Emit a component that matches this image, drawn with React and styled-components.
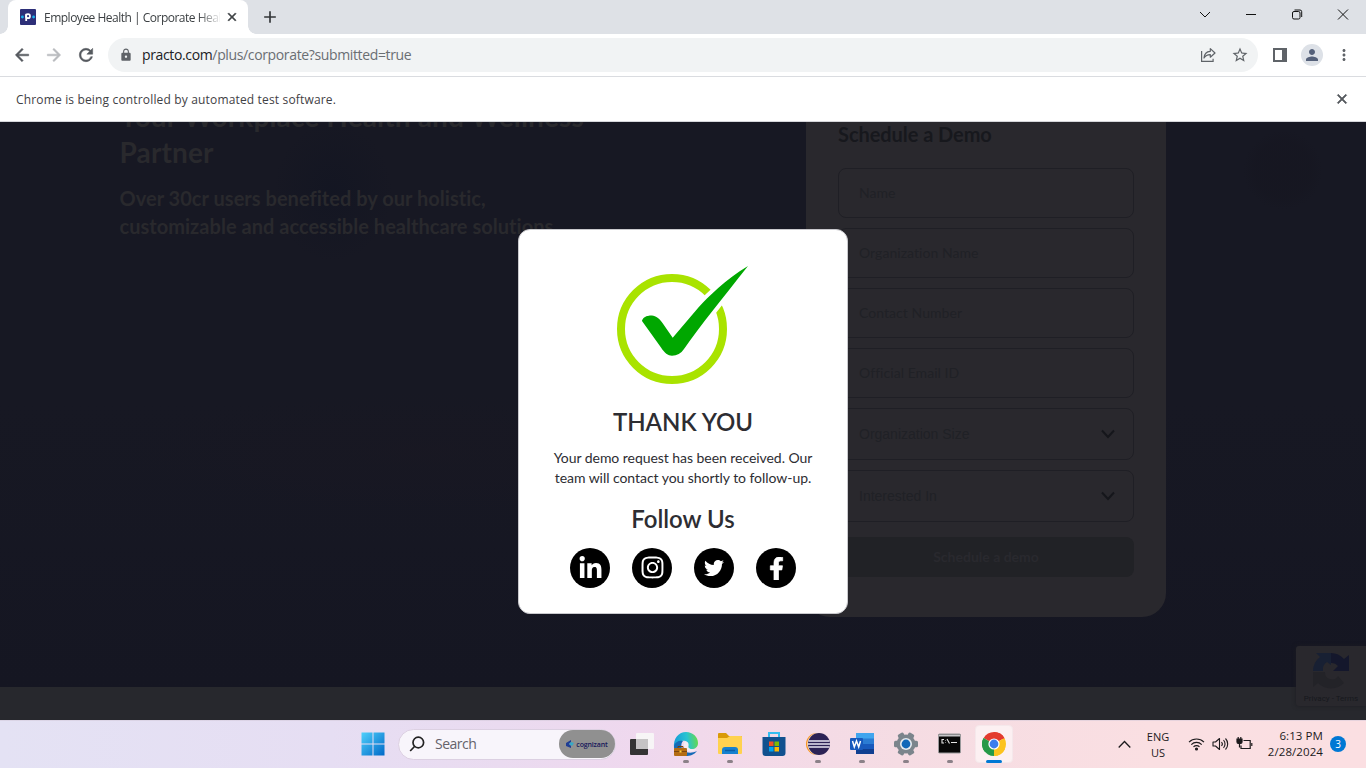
import React from "react";
import styled, { createGlobalStyle } from "styled-components";
import { FaLinkedinIn, FaInstagram, FaTwitter, FaFacebookF } from "react-icons/fa";
import { MdArrowBack, MdArrowForward, MdRefresh, MdLock, MdStarBorder, MdClose, MdAdd, MdPerson, MdMoreVert } from "react-icons/md";

const GlobalStyle = createGlobalStyle`
  * { box-sizing: border-box; }
  body { margin: 0; overflow: hidden; background: #171823; }
  h1, h2, p { margin: 0; }
  svg { display: block; flex: none; }
  path[fill="none"][d^="M0 0h24"] { stroke: none; }
`;

const uiFont = `"Open Sans", "Noto Sans", sans-serif`;

const Screen = styled.div`
  width: 1366px;
  height: 768px;
  display: flex;
  flex-direction: column;
  overflow: hidden;
  font-family: ${uiFont};
`;

/* ---------- browser frame ---------- */
const TabStrip = styled.header`
  height: 34px;
  flex: none;
  background: #dee1e6;
  display: flex;
  align-items: stretch;
  padding-left: 8px;
`;
const Tab = styled.div`
  width: 240px;
  background: #fff;
  border-radius: 8px 8px 0 0;
  display: flex;
  align-items: center;
  padding: 0 8px 0 12px;
  position: relative;
  &::before, &::after {
    content: "";
    position: absolute;
    bottom: 0;
    width: 8px;
    height: 8px;
  }
  &::before { left: -8px; background: radial-gradient(circle at 0 0, transparent 7.5px, #fff 8px); }
  &::after { right: -8px; background: radial-gradient(circle at 100% 0, transparent 7.5px, #fff 8px); }
`;
const TabTitle = styled.span`
  width: 176px;
  margin: 0 5px 0 8px;
  overflow: hidden;
  white-space: nowrap;
  font-size: 12px;
  letter-spacing: -0.5px;
  color: #3c4043;
  mask-image: linear-gradient(90deg, #000 154px, transparent 178px);
`;
const NewTab = styled.div`
  padding: 7px 0 0 12px;
  color: #333639;
`;
const WindowControls = styled.div`
  margin-left: auto;
  display: flex;
  height: 29px;
  align-items: center;
`;
const WindowButton = styled.div`
  width: 46px;
  display: flex;
  justify-content: center;
`;
const Toolbar = styled.div`
  height: 43px;
  flex: none;
  background: #fff;
  border-bottom: 1px solid #dadce0;
  display: flex;
  align-items: center;
  padding: 0 12px;
  color: #5f6368;
`;
const NavButton = styled.div`
  width: 32px;
  color: ${(p) => (p.$disabled ? "#b9bbbe" : "#55595e")};
  svg { stroke-width: 0.6px; }
`;
const Omnibox = styled.div`
  width: 1150px;
  height: 34px;
  border-radius: 17px;
  background: #f1f3f4;
  display: flex;
  align-items: center;
  padding: 0 9px 0 11px;
`;
const Url = styled.span`
  flex: 1;
  margin: -1px 0 0 9px;
  font-size: 14px;
  letter-spacing: -0.36px;
  color: #6a6e73;
  b { font-weight: 400; color: #202124; }
`;
const OmniActions = styled.div`
  display: flex;
  gap: 14px;
  align-items: center;
`;
const ToolbarActions = styled.div`
  display: flex;
  align-items: center;
  margin-left: 15px;
`;
const Avatar = styled.div`
  width: 22px;
  height: 22px;
  margin: 0 12px 0 14px;
  border-radius: 50%;
  background: #dde1e7;
  color: #55617a;
  display: flex;
  align-items: center;
  justify-content: center;
`;
const InfoBar = styled.div`
  height: 45px;
  flex: none;
  background: #fff;
  border-bottom: 1px solid #d5d6da;
  display: flex;
  align-items: center;
  justify-content: space-between;
  padding: 0 16px;
  font-size: 12px;
  color: #3f4145;
  letter-spacing: 0.16px;
`;

/* ---------- web page under the dialog ---------- */
const Page = styled.main`
  height: 598px;
  flex: none;
  position: relative;
  overflow: hidden;
  font-family: Lato, sans-serif;
  background: #27282d;
`;
const Hero = styled.section`
  height: 565px;
  display: flex;
  align-items: flex-start;
  justify-content: space-between;
  padding: 0 200px 0 119.5px;
  background:
    radial-gradient(circle at 1283px 48px, rgba(21, 21, 31, 0.5), rgba(21, 21, 31, 0.4) 28px, transparent 40px),
    radial-gradient(ellipse 60px 70px at 333px 70px, rgba(18, 21, 34, 0.7), transparent),
    radial-gradient(ellipse 300px 60px at 420px 330px, rgba(25, 24, 34, 0.7), transparent),
    linear-gradient(180deg, #171823 0%, #171823 50%, #151622 100%);
`;
const Copy = styled.div`
  color: #29292d;
`;
const Headline = styled.h1`
  margin-top: -24px;
  font-size: 28px;
  line-height: 36px;
  font-weight: 700;
  letter-spacing: 0.15px;
`;
const Lead = styled.p`
  margin-top: 14px;
  font-size: 20px;
  line-height: 28px;
  font-weight: 700;
  letter-spacing: 0.03px;
`;
const FormCard = styled.div`
  width: 360px;
  height: 495px;
  padding: 0 32px;
  border-radius: 0 0 24px 24px;
  background: #29282d;
`;
const FormTitle = styled.h2`
  margin: -1px 0 21px;
  font-size: 20px;
  line-height: 26px;
  font-weight: 700;
  letter-spacing: -0.06px;
  color: #17181d;
`;
const Field = styled.div`
  height: ${(p) => (p.$select ? 52 : 50)}px;
  margin-bottom: 10px;
  padding: 0 17px ${(p) => (p.$select ? 0 : 2)}px 20px;
  border: 1px solid #1f1f25;
  border-radius: 8px;
  display: flex;
  align-items: center;
  justify-content: space-between;
  font-family: ${(p) => (p.$select ? `"Liberation Sans", Arial, sans-serif` : "Lato, sans-serif")};
  font-size: 14px;
  letter-spacing: ${(p) => (p.$select ? 0 : 0.05)}px;
  color: #202126;
`;
const Submit = styled.div`
  height: 40px;
  margin-top: 15px;
  padding-bottom: 2px;
  border-radius: 8px;
  background: #212226;
  color: #29292e;
  font-size: 14px;
  font-weight: 700;
  display: flex;
  align-items: center;
  justify-content: center;
`;
const Captcha = styled.aside`
  position: absolute;
  right: 0;
  top: 524px;
  width: 70px;
  height: 60px;
  border-radius: 3px 0 0 3px;
  background: #29282d;
  box-shadow: 0 0 4px #1c1c22;
  display: flex;
  flex-direction: column;
  align-items: center;
  padding-top: 6px;
  font: 8px Roboto, sans-serif;
  color: #17181d;
  svg { margin-bottom: 4px; }
`;

/* ---------- dialog ---------- */
const Overlay = styled.div`
  position: absolute;
  inset: 0;
  display: flex;
  justify-content: center;
  align-items: flex-start;
  padding-top: 107px;
`;
const Dialog = styled.div`
  width: 330px;
  height: 385px;
  border-radius: 12px;
  border: 1px solid #c9c9cd;
  background: #fff;
  color: #2d2d32;
  text-align: center;
  display: flex;
  flex-direction: column;
  align-items: center;
  padding-top: 35px;
`;
const DialogTitle = styled.h2`
  margin-top: ${(p) => p.$gap}px;
  font-size: 24px;
  line-height: 30px;
  font-weight: 600;
`;
const DialogText = styled.p`
  width: 270px;
  margin-top: 11px;
  font-size: 14px;
  line-height: 20px;
  letter-spacing: -0.05px;
`;
const Socials = styled.div`
  display: flex;
  gap: 22px;
  margin-top: 13.5px;
`;
const Social = styled.div`
  width: 40px;
  height: 40px;
  padding-top: ${(p) => p.$drop || 0}px;
  border-radius: 50%;
  background: #000;
  color: #fff;
  display: flex;
  align-items: center;
  justify-content: center;
`;

/* ---------- taskbar ---------- */
const Taskbar = styled.footer`
  height: 48px;
  flex: none;
  display: flex;
  align-items: center;
  padding-left: 361px;
  background: linear-gradient(90deg, #e4e2f4 0, #e6def3 330px, #eadbf0 500px, #efd8ee 640px, #f3dae8 760px, #f5dce3 900px, #fadfe2 1150px, #fbdfe2 100%);
  box-shadow: inset 0 1px rgba(210, 200, 215, 0.5);
`;
const SearchBox = styled.div`
  width: 218px;
  height: 31px;
  margin: 0 4px 0 13px;
  border-radius: 16px;
  background: #f8f5fb;
  border: 1px solid #dcd0e2;
  display: flex;
  align-items: center;
  padding-left: 10px;
  font-size: 14px;
  letter-spacing: -0.5px;
  color: #65626a;
  span { margin: -1px 0 0 10px; flex: 1; }
`;
const SearchBadge = styled.div`
  width: 56px;
  height: 28px;
  border-radius: 14px;
  background: #909090;
  display: flex;
  align-items: center;
  justify-content: center;
  gap: 2px;
  font-size: 7px;
  font-weight: 600;
  letter-spacing: -0.15px;
  color: #17175a;
`;
const AppSlot = styled.div`
  width: 44px;
  height: 48px;
  display: flex;
  align-items: center;
  justify-content: center;
  position: relative;
  &::after {
    content: "";
    position: absolute;
    bottom: 5px;
    width: ${(p) => (p.$active ? 16 : p.$running ? 6 : 0)}px;
    height: 3px;
    border-radius: 2px;
    background: ${(p) => (p.$active ? "#0078d4" : "#8b8188")};
  }
`;
const ActiveTile = styled.div`
  width: 38px;
  height: 38px;
  border-radius: 4px;
  background: #fcf0f2;
  border: 1px solid #f5e8eb;
  display: flex;
  align-items: center;
  justify-content: center;
`;
const Tray = styled.div`
  margin-left: auto;
  display: flex;
  align-items: center;
  padding-right: 20px;
  font-size: 11px;
  line-height: 16px;
  color: #1c1a1c;
`;
const Language = styled.div`
  width: 30px;
  margin: 1px 15px 0 12px;
  text-align: center;
`;
const TrayIcons = styled.div`
  display: flex;
  gap: 7px;
`;
const Clock = styled.div`
  width: 64px;
  margin: -1px 7px 0 6px;
  text-align: right;
  white-space: nowrap;
  font-size: 11.5px;
  letter-spacing: 0.08px;
`;
const Count = styled.div`
  width: 16px;
  height: 16px;
  border-radius: 50%;
  background: #0078d4;
  color: #fff;
  text-align: center;
  font-size: 10px;
`;

const PractoIcon = () => (
  <svg width="16" height="16" viewBox="0 0 16 16">
    <rect width="16" height="16" rx="1" fill="#2d2f78" />
    <circle cx="2.4" cy="8" r="1.4" fill="#19b4ef" />
    <circle cx="13.6" cy="8" r="1.4" fill="#19b4ef" />
    <path d="M6.2 4.8V12" stroke="#fff" strokeWidth="1.8" />
    <circle cx="8" cy="7.2" r="2" fill="none" stroke="#fff" strokeWidth="1.7" />
  </svg>
);

const ShareIcon = () => (
  <svg width="18" height="18" viewBox="0 0 18 18" fill="none" stroke="#5f6368" strokeWidth="1.2">
    <path d="M2.6 5v10.4h11.5v-2.6" />
    <path d="M5 12c.3-4 2.7-6.5 6.3-6.700V2.600L16 7l-4.700 4.200V8.600C8.500 8.500 6.600 9.500 5 12z" strokeLinejoin="round" />
  </svg>
);

const checkPath =
  "M748 266C725 280 709 296 698 308L672.700 337.700L662.500 323C658 316.500 653 315.200 649 315.700C645 316 642.500 318.500 642 321L661 347.500C664.500 353 668 355.700 672 355.700C677 355.700 681 353.500 684 349C700 326 722 299 748 266Z";

const SuccessMark = () => (
  <svg width="134" height="120" viewBox="616 265 134 120">
    <circle cx="672" cy="329" r="51" fill="none" stroke="#a9e300" strokeWidth="8" />
    <path d={checkPath} fill="#fff" stroke="#fff" strokeWidth="8" />
    <path d={checkPath} fill="#00a700" />
  </svg>
);

const Chevron = () => (
  <svg width="16" height="12" viewBox="0 0 16 12" fill="none" stroke="#15161b" strokeWidth="2">
    <path d="M2 2.500l6 6.500 6-6.500" />
  </svg>
);

const CaptchaLogo = () => (
  <svg width="38" height="38" viewBox="0 0 38 38">
    <path d="M1 19A18 18 0 0 1 8 5L4 1H19V13L15 10A9 9 0 0 0 11 19Z" fill="#182033" />
    <path d="M19 1A18 18 0 0 1 32 7L37 3V19H21L26 14A8 8 0 0 0 19 11Z" fill="#14172c" />
    <path d="M1 20H13A7 7 0 0 0 26 24L32 31A18 18 0 0 1 6 31L1 35Z" fill="#232328" />
  </svg>
);

const WindowsLogo = () => (
  <svg width="24" height="24" viewBox="0 0 24 24">
    <defs>
      <linearGradient id="win" x1="0" y1="0" x2="1" y2="1">
        <stop offset="0" stopColor="#4fd0fb" /><stop offset="1" stopColor="#0069c8" />
      </linearGradient>
    </defs>
    <path d="M.5.500h11v11H.500zM12.500.500h11v11h-11zM.5 12.500h11v11H.500zM12.500 12.500h11v11h-11z" fill="url(#win)" />
  </svg>
);

const TaskViewIcon = () => (
  <svg width="24" height="24" viewBox="0 0 24 24">
    <rect x="0" y="7" width="18" height="16" rx="1" fill="#343434" />
    <rect x="6" y="1" width="18" height="16" rx="1" fill="#f7f5f6" />
    <rect x="6" y="7" width="12" height="10" fill="#c5c3c4" />
  </svg>
);

const EdgeIcon = () => (
  <svg width="26" height="26" viewBox="0 0 26 26">
    <defs>
      <linearGradient id="edge" x1="0" y1=".5" x2="1" y2=".4">
        <stop offset="0" stopColor="#169bd7" /><stop offset=".55" stopColor="#29c3d2" /><stop offset="1" stopColor="#66d94b" />
      </linearGradient>
    </defs>
    <path d="M1 17C0 7 6 1 13 1s12 5 12 11c0 4-3 6-6 6-3 0-5-1-4-3 1-4-3-6-6-5-4 1-6 4-5 9z" fill="url(#edge)" />
    <path d="M1 15c1-4 5-6 9-5-3 3-2 9 3 11 3 1 7 1 11-1-3 4-7 5-11 5C6 25 1 21 1 15z" fill="#146ab7" />
    <path d="M12 10.500c3 0 4 2 3.500 4.500-1 3 4 4 8 3-2 3-7 3-9.500 1-3-2-4-6-2-8.500z" fill="#f4ecf4" />
    <rect x="1" y="17" width="13" height="8" rx="1" fill="#b46c13" />
    <path d="M5 17v-1.500h5V17" fill="none" stroke="#744009" />
    <path d="M1 20.500h13" stroke="#7c470c" /><rect x="6.500" y="19.500" width="2" height="2" fill="#ffd23e" />
  </svg>
);

const FolderIcon = () => (
  <svg width="26" height="24" viewBox="0 0 26 24">
    <path d="M1 2a1 1 0 0 1 1-1h7l3 3h12a1 1 0 0 1 1 1v5H1z" fill="#d99a08" />
    <path d="M1 6h9l3-2h11a1 1 0 0 1 1 1v16a1 1 0 0 1-1 1H2a1 1 0 0 1-1-1z" fill="#ffd24f" />
    <path d="M5 22v-4a3 3 0 0 1 3-3h10a3 3 0 0 1 3 3v4z" fill="#1681cf" />
    <path d="M8 18.500h10" stroke="#0a5da5" strokeWidth="1.500" />
  </svg>
);

const StoreIcon = () => (
  <svg width="26" height="26" viewBox="0 0 26 26">
    <path d="M8 6V2h10v4" fill="none" stroke="#34bdf0" strokeWidth="2" />
    <path d="M1.500 6h23v16a3 3 0 0 1-3 3h-17a3 3 0 0 1-3-3z" fill="#11518f" />
    <path d="M8 10.500h4.500V15H8z" fill="#f25022" /><path d="M13.500 10.500H18V15h-4.500z" fill="#7fba00" />
    <path d="M8 16h4.500v4.500H8z" fill="#00a4ef" /><path d="M13.500 16H18v4.500h-4.500z" fill="#ffb900" />
  </svg>
);

const EclipseIcon = () => (
  <svg width="26" height="24" viewBox="0 0 26 24">
    <circle cx="12" cy="12" r="11" fill="#f7941e" />
    <circle cx="13.300" cy="12" r="11" fill="#f8e9e6" />
    <circle cx="14" cy="12" r="11" fill="#2c2255" />
    <path d="M3.500 9h21M3 12h22M3.500 15h21" stroke="#e8e6f2" strokeWidth="1.500" />
  </svg>
);

const WordIcon = () => (
  <svg width="26" height="24" viewBox="0 0 26 24">
    <path d="M7 1h18v6H7z" fill="#41a5ee" /><path d="M7 6.500h18V12H7z" fill="#2b7cd3" />
    <path d="M7 12h18v5.500H7z" fill="#185abd" /><path d="M7 17h18v5H7z" fill="#103f91" />
    <rect x="1" y="6" width="13" height="12" rx="1" fill="#185abd" />
    <path d="M3.500 9l1.800 6 2.200-6 2.200 6 1.800-6" fill="none" stroke="#fff" strokeWidth="1.500" />
  </svg>
);

const SettingsIcon = () => (
  <svg width="26" height="26" viewBox="0 0 26 26">
    {[0, 60, 120].map((a) => (
      <rect key={a} x="9.800" y="1" width="6.400" height="24" rx="1.500" fill="#7b858c" transform={`rotate(${a + 30} 13 13)`} />
    ))}
    <circle cx="13" cy="13" r="9.500" fill="#7b858c" />
    <circle cx="13" cy="13" r="6" fill="#e6ebef" />
    <circle cx="13" cy="13" r="4.400" fill="#0f67b8" />
  </svg>
);

const TerminalIcon = () => (
  <svg width="24" height="22" viewBox="0 0 24 22">
    <rect x=".5" y="1" width="22" height="19" rx="1" fill="#080808" stroke="#99999b" />
    <path d="M1 2.500h21" stroke="#c6c6c8" strokeWidth="2" />
    <path d="M6 6.500H4V10h2M7.500 7v.6M7.500 9.200v.6M9 6l2.500 4.500M13 9.500h6" fill="none" stroke="#e5e5e5" strokeWidth="1.100" />
  </svg>
);

const ChromeIcon = () => (
  <svg width="24" height="24" viewBox="0 0 24 24">
    <path d="M12 12L1.610 6A12 12 0 0 1 22.390 6Z" fill="#e33b2e" />
    <path d="M12 12L22.390 6A12 12 0 0 1 12 24Z" fill="#fcc31e" />
    <path d="M12 12L12 24A12 12 0 0 1 1.610 6Z" fill="#269a48" />
    <path d="M12 6.400h10.600A12 12 0 0 0 12 0Z" fill="#e33b2e" />
    <path d="M7.150 14.800L1.610 6A12 12 0 0 0 3 20Z" fill="#269a48" />
    <path d="M16.850 14.800L12 24a12 12 0 0 0 11-7z" fill="#fcc31e" />
    <circle cx="12" cy="12" r="5.600" fill="#fff" />
    <circle cx="12" cy="12" r="4.400" fill="#3b7ded" />
  </svg>
);

const WifiIcon = () => (
  <svg width="17" height="14" viewBox="0 0 17 14" fill="none" stroke="#1c1a1c" strokeWidth="1.100">
    <path d="M1 5.200a10.500 10.500 0 0 1 15 0M3.300 7.600a7.300 7.300 0 0 1 10.400 0M5.500 9.900a4.200 4.200 0 0 1 6 0" />
    <circle cx="8.500" cy="12" r="1" fill="#1c1a1c" />
  </svg>
);
const SoundIcon = () => (
  <svg width="17" height="14" viewBox="0 0 17 14" fill="none" stroke="#1c1a1c" strokeWidth="1.100">
    <path d="M1 5h2.500L7.500 1.500v11L3.500 9H1z" strokeLinejoin="round" />
    <path d="M9.500 5a3 3 0 0 1 0 4M11.500 3.200a5.500 5.500 0 0 1 0 7.600M13.500 1.500a8 8 0 0 1 0 11" />
  </svg>
);
const BatteryIcon = () => (
  <svg width="17" height="14" viewBox="0 0 17 14" fill="none" stroke="#1c1a1c" strokeWidth="1.200">
    <path d="M7.500 3.500h6.700v8H5V8.500M15.800 6v3" />
    <path d="M1 2h5v3a1.500 1.500 0 0 1-1.500 1.500h-2A1.500 1.500 0 0 1 1 5zM2.200 0v2M4.800 0v2M3.500 6.500v4" fill="#1c1a1c" />
  </svg>
);

const stroke = { fill: "none", stroke: "#111", strokeWidth: 1 };
const bold = { stroke: "currentColor", strokeWidth: 1 };
const fields = ["Name", "Organization Name", "Contact Number", "Official Email ID"];
const selects = ["Organization Size", "Interested In"];
const apps = [
  [EdgeIcon, true], [FolderIcon, true], [StoreIcon, false], [EclipseIcon, true],
  [WordIcon, true], [SettingsIcon, true], [TerminalIcon, true],
];

export default function App() {
  return (
    <Screen>
      <GlobalStyle />
      <TabStrip>
        <Tab>
          <PractoIcon />
          <TabTitle>Employee Health | Corporate Health</TabTitle>
          <MdClose size={14} color="#3c4043" {...bold} />
        </Tab>
        <NewTab><MdAdd size={20} /></NewTab>
        <WindowControls>
          <WindowButton><svg width="12" height="12" {...stroke}><path d="M1 3l5 5 5-5" /></svg></WindowButton>
          <WindowButton><svg width="10" height="12" {...stroke}><path d="M0 5.500h10" /></svg></WindowButton>
          <WindowButton>
            <svg width="12" height="12" {...stroke}>
              <rect x="1.500" y="2.500" width="7.500" height="7.500" rx="1.500" />
              <path d="M3.500 1H9a1.700 1.700 0 0 1 1.700 1.700V8" />
            </svg>
          </WindowButton>
          <WindowButton><svg width="12" height="12" {...stroke}><path d="M1 .5l10 10M11 .5l-10 10" /></svg></WindowButton>
        </WindowControls>
      </TabStrip>
      <Toolbar>
        <NavButton><MdArrowBack size={20} stroke="currentColor" /></NavButton>
        <NavButton $disabled><MdArrowForward size={20} stroke="currentColor" /></NavButton>
        <NavButton><MdRefresh size={20} stroke="currentColor" /></NavButton>
        <Omnibox>
          <MdLock size={14} />
          <Url><b>practo.com</b>/plus/corporate?submitted=true</Url>
          <OmniActions><ShareIcon /><MdStarBorder size={18} /></OmniActions>
        </Omnibox>
        <ToolbarActions>
          <svg width="14" height="14"><path d="M1 1h12v12H1z" fill="none" stroke="#5f6368" strokeWidth="2" /><path d="M9 1h4v12H9z" fill="#5f6368" /></svg>
          <Avatar><MdPerson size={18} /></Avatar>
          <MdMoreVert size={18} />
        </ToolbarActions>
      </Toolbar>
      <InfoBar>
        <span>Chrome is being controlled by automated test software.</span>
        <MdClose size={16} color="#55595e" {...bold} />
      </InfoBar>

      <Page>
        <Hero>
          <Copy>
            <Headline>Your Workplace Health and Wellness<br />Partner</Headline>
            <Lead>Over 30cr users benefited by our holistic,<br />customizable and accessible healthcare solutions.</Lead>
          </Copy>
          <FormCard>
            <FormTitle>Schedule a Demo</FormTitle>
            {fields.map((f) => <Field key={f}>{f}</Field>)}
            {selects.map((f) => <Field key={f} $select>{f}<Chevron /></Field>)}
            <Submit>Schedule a demo</Submit>
          </FormCard>
        </Hero>
        <Captcha><CaptchaLogo />Privacy - Terms</Captcha>
        <Overlay>
          <Dialog>
            <SuccessMark />
            <DialogTitle $gap={22}>THANK YOU</DialogTitle>
            <DialogText>Your demo request has been received. Our<br />team will contact you shortly to follow-up.</DialogText>
            <DialogTitle $gap={16}>Follow Us</DialogTitle>
            <Socials>
              <Social $drop={1}><FaLinkedinIn size={25} /></Social>
              <Social><FaInstagram size={25} /></Social>
              <Social><FaTwitter size={20} /></Social>
              <Social $drop={2}><FaFacebookF size={23} stroke="#fff" strokeWidth={16} /></Social>
            </Socials>
          </Dialog>
        </Overlay>
      </Page>

      <Taskbar>
        <WindowsLogo />
        <SearchBox>
          <svg width="16" height="16" viewBox="0 0 16 16" fill="none" stroke="#222" strokeWidth="1.700">
            <circle cx="9.300" cy="6.500" r="5.300" /><path d="M5.500 10.500L1.200 15" />
          </svg>
          <span>Search</span>
          <SearchBadge>
            <svg width="8" height="8" viewBox="0 0 8 8"><path d="M5 0L0 3v3l5 2V6L3 4l2-2z" fill="#1f3d94" /><path d="M5 2l3 1-2 3-3-2z" fill="#36a9c8" /></svg>
            cognizant
          </SearchBadge>
        </SearchBox>
        <AppSlot><TaskViewIcon /></AppSlot>
        {apps.map(([Icon, running], i) => <AppSlot key={i} $running={running}><Icon /></AppSlot>)}
        <AppSlot $active><ActiveTile><ChromeIcon /></ActiveTile></AppSlot>
        <Tray>
          <svg width="13" height="10" fill="none" stroke="#1c1a1c" strokeWidth="1.300"><path d="M.7 8.500l5.800-6 5.800 6" /></svg>
          <Language>ENG<br />US</Language>
          <TrayIcons><WifiIcon /><SoundIcon /><BatteryIcon /></TrayIcons>
          <Clock>6:13 PM<br />2/28/2024</Clock>
          <Count>3</Count>
        </Tray>
      </Taskbar>
    </Screen>
  );
}
